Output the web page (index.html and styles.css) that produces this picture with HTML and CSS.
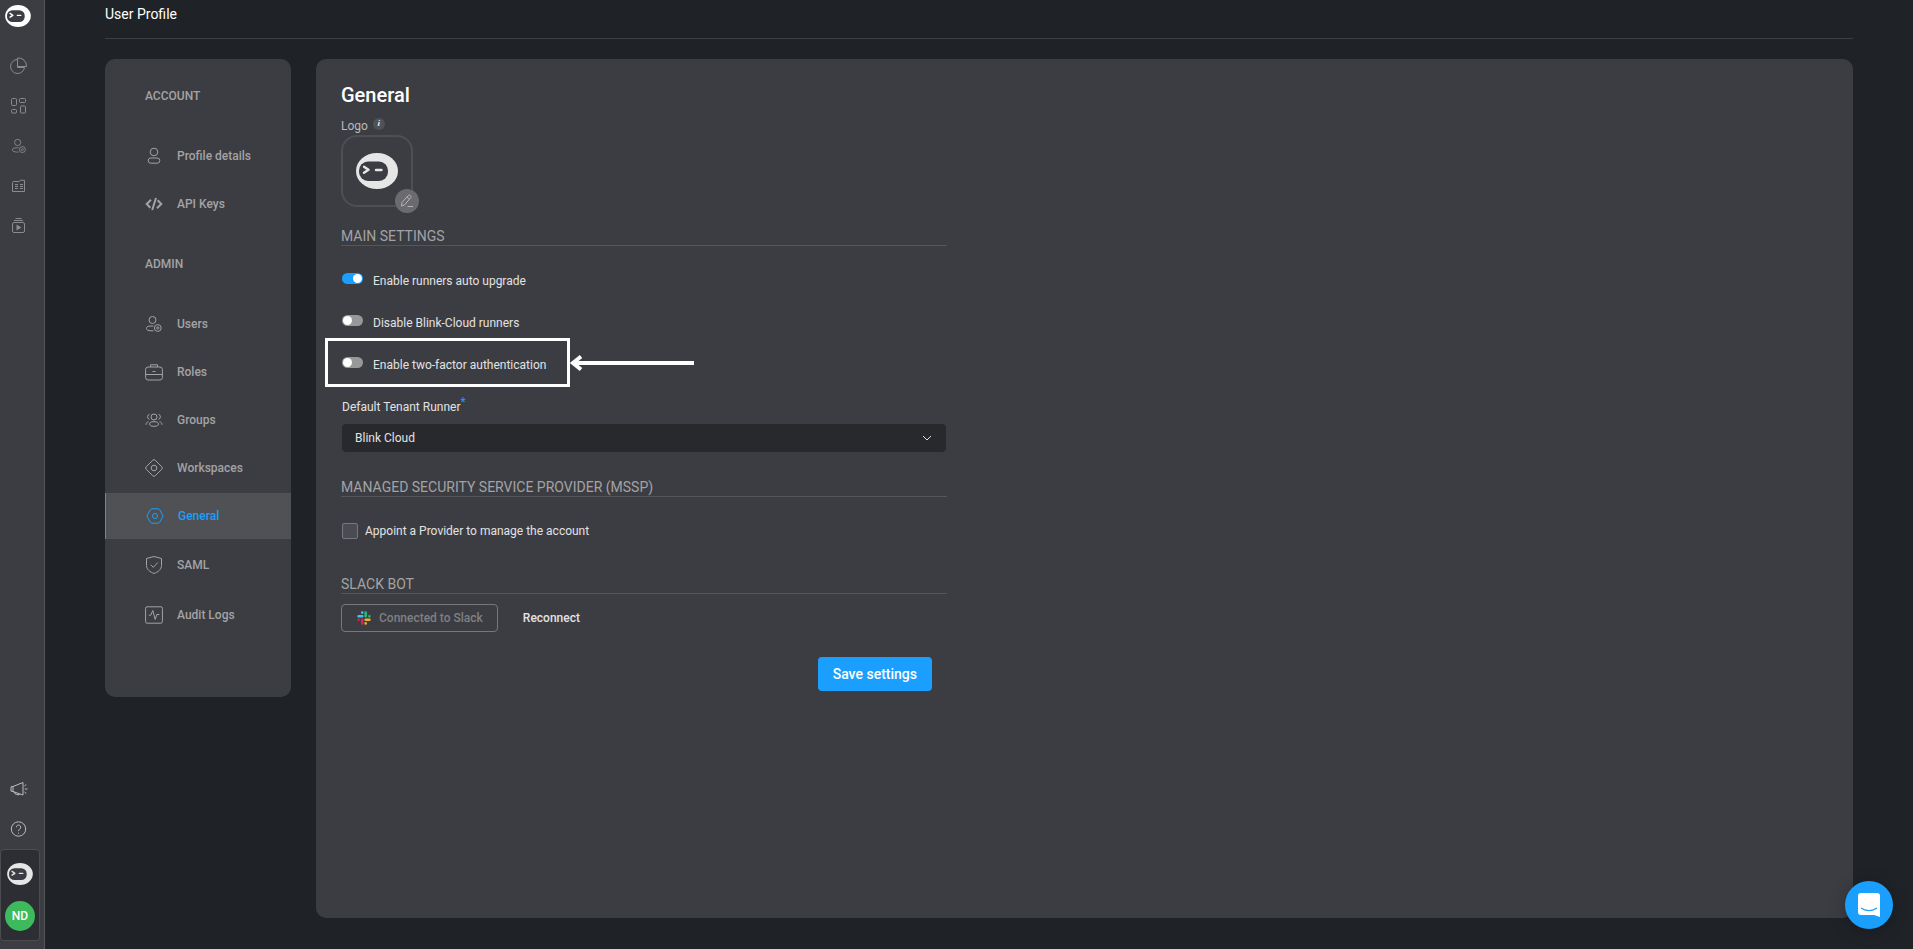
FILE: index.html
```html
<!DOCTYPE html>
<html lang="en">
<head>
<meta charset="utf-8">
<title>User Profile</title>
<meta name="viewport" content="width=device-width, initial-scale=1">
<link rel="stylesheet" href="styles.css">
</head>
<body>
<svg class="sprite" aria-hidden="true">
  <symbol id="bot" viewBox="0 0 42 36">
    <ellipse cx="21" cy="18" rx="21" ry="18" fill="currentColor"/>
    <rect class="bot-face" x="3" y="8.500" width="29" height="19.500" rx="9"/>
    <path d="M8 13.800l4.500 3-4.500 3M20 17h5.500" fill="none" stroke="currentColor" stroke-width="2.400" stroke-linecap="round" stroke-linejoin="round"/>
  </symbol>
  <symbol id="user-gear" viewBox="0 0 18 18">
    <circle cx="7.500" cy="5" r="3.500"/>
    <path d="M8.500 11H6a4.500 2.400 0 0 0 0 4.800h2.500"/>
    <circle cx="12.800" cy="13" r="3.400"/>
    <circle cx="12.800" cy="13" r="1.100"/>
  </symbol>
</svg>
<div class="app">
  <nav class="rail" aria-label="Main">
    <a class="rail-logo" href="#" aria-label="Home"><svg width="26" height="22"><use href="#bot"/></svg></a>
    <div class="rail-links">
      <a href="#" aria-label="Dashboard"><svg viewBox="0 0 18 18"><path d="M7.500 2.500A7 7 0 1 0 14.500 10.500H7.500z"/><path d="M7.500 2.500V1a8 8 0 0 1 9 8.500H7.500z"/></svg></a>
      <a href="#" aria-label="Apps"><svg viewBox="0 0 18 18"><rect x="1.500" y="1.500" width="5" height="7" rx="1"/><rect x="9.500" y="1.500" width="6" height="4" rx="1"/><rect x="1.500" y="12.500" width="5" height="3.500" rx="1"/><rect x="10.500" y="9" width="5" height="7" rx="1"/></svg></a>
      <a href="#" aria-label="Users"><svg class="small"><use href="#user-gear"/></svg></a>
      <a href="#" aria-label="Tables"><svg viewBox="0 0 18 18"><path d="M2.500 5.500q0-1 1-1H9l1.500-1.200h4V14.500h-12z"/><path d="M5 7.500h3M10 7.500h3M5 9.500h3M10 9.500h3M5 11.500h3M10 11.500h3"/></svg></a>
      <a href="#" aria-label="Runs"><svg viewBox="0 0 18 18"><rect x="2.500" y="5.500" width="12" height="10" rx="1.500"/><path d="M4 3.500h9M5.500 1.500h6"/><path class="solid" d="M6.500 7.500l5 3-5 3z"/></svg></a>
    </div>
    <div class="rail-help">
      <a href="#" aria-label="News"><svg viewBox="0 0 18 18"><path d="M1 6.800v4.400l2 .3 10 3.500V2.500L3 6.500zM3 6.500v5M4 11.800l1 2 4 1.200v-1.500M14.800 9h2.700M14.500 6l1.800-1.500M14.500 12l1.800 1.500"/></svg></a>
      <a href="#" aria-label="Help"><svg viewBox="0 0 18 18"><circle cx="8.500" cy="9" r="7.200"/><path d="M6.300 7.200a2.200 2.200 0 1 1 3.400 1.900c-.8.500-1.200.9-1.200 1.900M8.500 12.600v1"/></svg></a>
    </div>
    <div class="rail-account">
      <svg class="tenant" width="26" height="22"><use href="#bot"/></svg>
      <button class="avatar" type="button" aria-label="Account ND">ND</button>
    </div>
  </nav>

  <div class="page">
    <header class="page-head"><h1>User Profile</h1></header>
    <div class="columns">
      <nav class="menu" aria-label="Settings">
        <h2>ACCOUNT</h2>
        <a href="#"><svg viewBox="0 0 18 18"><circle cx="9" cy="5" r="3.800"/><rect x="3.200" y="11" width="11.600" height="5.200" rx="2.600"/></svg>Profile details</a>
        <a href="#"><svg viewBox="0 0 18 18"><path class="bold" d="M6 4.800L1.700 9l3.600 3.800M12 13.200L16.300 9l-3.600-3.800M11 3L7.200 15"/></svg>API Keys</a>
        <h2>ADMIN</h2>
        <a href="#"><svg><use href="#user-gear"/></svg>Users</a>
        <a href="#"><svg viewBox="0 0 18 18"><rect x=".6" y="4" width="16.800" height="13" rx="2.500"/><path d="M5.500 4V1.800h7V4M.6 11.500h16.800M7.500 8.500h3"/></svg>Roles</a>
        <a href="#"><svg viewBox="0 0 18 18"><circle cx="9" cy="6" r="3"/><ellipse cx="9" cy="13" rx="4.500" ry="2.300"/><path d="M4.500 3.300a2.600 2.600 0 0 0 0 5M13.500 3.300a2.600 2.600 0 0 1 0 5M3.500 10.800c-2 .3-2.500 1.500-2.500 3M14.500 10.800c2 .3 2.500 1.500 2.500 3"/></svg>Groups</a>
        <a href="#"><svg viewBox="0 0 18 18"><path d="M7.800 1.200q1.200-1.200 2.400 0l6.600 6.600q1.200 1.200 0 2.400l-6.600 6.600q-1.200 1.200-2.400 0L1.200 10.200Q0 9 1.200 7.800z"/><circle cx="9" cy="9" r="2.800"/></svg>Workspaces</a>
        <a class="active" href="#" aria-current="page"><svg viewBox="0 0 18 18"><path d="M5.800 1.800h6.400q.9 0 1.400.8l3 5.300q.6 1.100 0 2.200l-3 5.300q-.5.800-1.400.8H5.800q-.9 0-1.400-.8l-3-5.300q-.6-1.100 0-2.200l3-5.300q.5-.8 1.400-.8z"/><circle cx="9" cy="9" r="2.500"/></svg>General</a>
        <a class="tall" href="#"><svg viewBox="0 0 18 18"><path d="M9 .5l7.500 2v7c0 4-3.500 6.500-7.500 8-4-1.500-7.500-4-7.500-8v-7z"/><path d="M5.800 8.800l2.500 2.500 4.500-4.800"/></svg>SAML</a>
        <a class="tall" href="#"><svg viewBox="0 0 18 18"><rect x=".6" y=".8" width="16.800" height="16.400" rx="1.500"/><path d="M3.800 9.200h2L7.800 4.500l2.400 9 1.600-5h2.600"/></svg>Audit Logs</a>
      </nav>

      <main class="content">
        <form class="form">
          <h2 class="title">General</h2>
          <div class="logo-label">Logo <span class="info">i</span></div>
          <div class="logo-box">
            <svg width="42" height="36"><use href="#bot"/></svg>
            <button class="edit" type="button" aria-label="Edit logo"><svg viewBox="0 0 14 14"><path d="M1.500 12l.5-3.500L8.200 1.500q1-1 2.200 0 1.300 1 .3 2.200L4.500 11zM7 3l2.500 2M7.500 12.500H13"/></svg></button>
          </div>

          <h3 class="section">MAIN SETTINGS</h3>
          <div class="toggles">
            <label class="toggle"><input type="checkbox" role="switch" checked><span>Enable runners auto upgrade</span></label>
            <label class="toggle"><input type="checkbox" role="switch"><span>Disable Blink-Cloud runners</span></label>
            <div class="marked">
              <label class="toggle"><input type="checkbox" role="switch"><span>Enable two-factor authentication</span></label>
              <span class="frame"></span>
              <svg class="arrow" viewBox="0 0 126 18"><path d="M12 2.500L4 9l8 6.500M4 9h121"/></svg>
            </div>
          </div>
          <label class="field-label" for="runner">Default Tenant Runner<span class="star">*</span></label>
          <div class="select">
            <select id="runner"><option>Blink Cloud</option></select>
            <svg viewBox="0 0 10 6"><path d="M1 1l4 4 4-4"/></svg>
          </div>

          <h3 class="section mssp">MANAGED SECURITY SERVICE PROVIDER (MSSP)</h3>
          <label class="check"><input type="checkbox">Appoint a Provider to manage the account</label>

          <h3 class="section slack">SLACK BOT</h3>
          <div class="slack-row">
            <button class="connected" type="button" disabled>
              <svg viewBox="0 0 14 14" fill="none" stroke-width="2.600" stroke-linecap="round"><path stroke="#36c5f0" d="M5.200 1.600h.1M1.600 5.200h3.700"/><path stroke="#2eb67d" d="M8.700 1.600v3.700M12.400 5.200v.1"/><path stroke="#ecb22e" d="M8.700 12.400v.1M8.700 8.700h3.700"/><path stroke="#e01e5a" d="M5.200 8.700v3.700M1.600 8.700v.1"/></svg>
              Connected to Slack
            </button>
            <button class="reconnect" type="button">Reconnect</button>
          </div>
          <button class="save" type="submit">Save settings</button>
        </form>
      </main>
    </div>
  </div>
</div>
<button class="chat" type="button" aria-label="Open chat"><svg viewBox="0 0 22 24"><path fill="#fff" d="M3 0h16q3 0 3 3v21l-6-2H3q-3 0-3-3V3q0-3 3-3z"/><path d="M3.500 15.200q7.500 5 15 0" fill="none" stroke="#1a9fff" stroke-width="1.300" stroke-linecap="round"/></svg></button>
</body>
</html>
```
FILE: styles.css
```css
* { box-sizing: border-box; }

:root {
  --page: #1f2227;
  --panel: #3c3d42;
  --line: #55565a;
  --muted: #a3a3a5;
  --text: #e2e2e3;
  --blue: #1a9fff;
}

body {
  margin: 0;
  background: var(--page);
  color: var(--text);
  font: 12px/16px Roboto, "Liberation Sans", sans-serif;
}

h1, h2, h3 { margin: 0; font-weight: 400; }
a { color: inherit; text-decoration: none; }
button, select, input { font: inherit; color: inherit; margin: 0; }
button { border: 0; background: none; padding: 0; cursor: pointer; }
svg { display: block; flex: none; }
.sprite { position: absolute; width: 0; height: 0; }
.bot-face { fill: var(--panel); }

.app { display: flex; min-height: 100vh; }

/* Icon rail */
.rail {
  display: flex;
  flex-direction: column;
  width: 45px;
  flex: none;
  background: var(--panel);
  border-right: 1px solid var(--line);
  padding: 5px 4px 8px 0;
}
.rail-logo { color: #fff; padding-left: 5px; }
.rail-links, .rail-help {
  display: flex;
  flex-direction: column;
  color: #8b8b8e;
}
.rail-links { padding-top: 19px; }
.rail a { display: block; }
.rail-links a, .rail-help a {
  display: grid;
  place-items: center;
  width: 38px;
  height: 40px;
}
.rail-links svg, .rail-help svg, .menu svg {
  width: 18px;
  height: 18px;
  fill: none;
  stroke: currentColor;
  stroke-width: 1;
}
.rail-links .small { width: 16px; height: 16px; }
.solid { fill: currentColor; stroke: none; }
.rail-help { margin-top: auto; color: #bcbcbe; }
.rail-account {
  display: flex;
  flex-direction: column;
  align-items: center;
  gap: 16px;
  padding: 13px 0 9px;
  background: #2d2e33;
  border: 1px solid #4b4c50;
  border-radius: 4px;
}
.tenant { color: #e6e6e6; }
.avatar {
  width: 30px;
  height: 30px;
  border-radius: 50%;
  background: #3dba5c;
  color: #fff;
  font-weight: 500;
}

/* Page */
.page {
  flex: 1;
  min-width: 0;
  display: flex;
  flex-direction: column;
  padding: 0 60px 31px;
}
.page-head {
  height: 39px;
  padding-top: 4px;
  border-bottom: 1px solid #3d3e42;
}
.page-head h1 { font-size: 14px; line-height: 20px; color: #fff; }
.columns {
  flex: 1;
  display: flex;
  align-items: flex-start;
  gap: 25px;
  padding-top: 20px;
}

/* Settings menu */
.menu {
  width: 186px;
  flex: none;
  padding: 13px 0 57px;
  background: var(--panel);
  border-radius: 10px;
  color: var(--muted);
  font-weight: 500;
}
.menu h2 {
  font-size: 12px;
  line-height: 48px;
  font-weight: 500;
  padding-left: 40px;
  margin-bottom: 12px;
}
.menu a + h2 { margin-top: 12px; }
.menu a {
  display: flex;
  align-items: center;
  gap: 14px;
  height: 48px;
  padding-left: 40px;
}
.menu .bold { stroke-width: 2; }
.menu .active {
  height: 46px;
  margin: 1px 0;
  color: var(--blue);
  background: #505154;
  border-left: 1px solid var(--blue);
}
.menu .tall { height: 50px; }

/* Content */
.content {
  flex: 1;
  min-width: 0;
  align-self: stretch;
  background: var(--panel);
  border-radius: 10px;
  padding: 24px 25px;
}
.form {
  display: flex;
  flex-direction: column;
  max-width: 606px;
}
.title { font-size: 20px; line-height: 24px; font-weight: 500; color: #fff; }
.logo-label {
  display: flex;
  align-items: flex-start;
  gap: 5px;
  margin-top: 11px;
  line-height: 17px;
  color: #bababc;
}
.info {
  width: 12px;
  height: 12px;
  border-radius: 50%;
  background: #515257;
  color: #fff;
  font: italic 700 8px/12px Roboto, sans-serif;
  text-align: center;
}
.logo-box {
  position: relative;
  display: grid;
  place-items: center;
  width: 72px;
  height: 72px;
  border: 2px solid #4e4f54;
  border-radius: 16px;
  color: #e6e6e6;
}
.edit {
  position: absolute;
  right: -8px;
  bottom: -8px;
  display: grid;
  place-items: center;
  width: 24px;
  height: 24px;
  border-radius: 50%;
  background: #6b6b6f;
  color: #b4b4b6;
}
.edit svg { width: 14px; height: 14px; fill: none; stroke: currentColor; }

.section {
  margin-top: 20px;
  font-size: 14px;
  line-height: 18px;
  color: var(--muted);
  border-bottom: 1px solid var(--line);
}
.toggles {
  display: flex;
  flex-direction: column;
  align-items: flex-start;
  gap: 26px;
  padding: 27px 1px 0;
}
.toggle { display: flex; gap: 10px; }
.toggle input {
  appearance: none;
  width: 21px;
  height: 11px;
  border-radius: 6px;
  background: #98989a;
  display: flex;
  align-items: center;
}
.toggle input::before {
  content: "";
  width: 9px;
  height: 9px;
  margin: 1px;
  border-radius: 50%;
  background: #fff;
}
.toggle input:checked { background: var(--blue); justify-content: flex-end; }
.marked { position: relative; }
.frame {
  position: absolute;
  left: -17px;
  top: -19px;
  width: 245px;
  height: 49px;
  border: 3px solid #fff;
  pointer-events: none;
}
.arrow {
  position: absolute;
  left: 227px;
  top: -3px;
  width: 126px;
  height: 18px;
  fill: none;
  stroke: #fff;
  stroke-width: 4;
}
.field-label { padding-left: 1px; margin-top: 26px; }
.star { color: var(--blue); vertical-align: 5px; line-height: 0; }
.select { position: relative; margin: 9px 1px 0; }
.select select {
  appearance: none;
  display: block;
  width: 100%;
  height: 28px;
  padding: 0 13px;
  border: 0;
  border-radius: 4px;
  background: #28292d;
}
.select svg {
  position: absolute;
  right: 14px;
  top: 11px;
  width: 10px;
  height: 6px;
  fill: none;
  stroke: currentColor;
  pointer-events: none;
}
.mssp { margin-top: 26px; }
.check {
  display: flex;
  align-items: center;
  gap: 7px;
  margin-top: 26px;
  padding-left: 1px;
}
.check input {
  appearance: none;
  width: 16px;
  height: 16px;
  border: 1px solid #77787c;
  border-radius: 2px;
  background: #4b4c53;
}
.slack { margin-top: 36px; }
.slack-row {
  display: flex;
  align-items: center;
  gap: 25px;
  margin-top: 10px;
  font-weight: 500;
}
.connected {
  display: flex;
  align-items: center;
  gap: 8px;
  height: 28px;
  padding: 0 14px 0 15px;
  border: 1px solid #77787b;
  border-radius: 4px;
  color: #7f8083;
}
.connected svg { width: 14px; height: 14px; }
.save {
  align-self: flex-end;
  height: 34px;
  margin: 25px 15px 0 0;
  padding: 0 15px;
  border-radius: 4px;
  background: var(--blue);
  color: #fff;
  font-size: 14px;
  font-weight: 500;
}

.chat {
  position: fixed;
  right: 20px;
  bottom: 20px;
  display: grid;
  place-items: center;
  width: 48px;
  height: 48px;
  border-radius: 50%;
  background: var(--blue);
  box-shadow: 0 2px 16px rgba(0, 0, 0, 0.25);
}
.chat svg { width: 22px; height: 24px; }
```
